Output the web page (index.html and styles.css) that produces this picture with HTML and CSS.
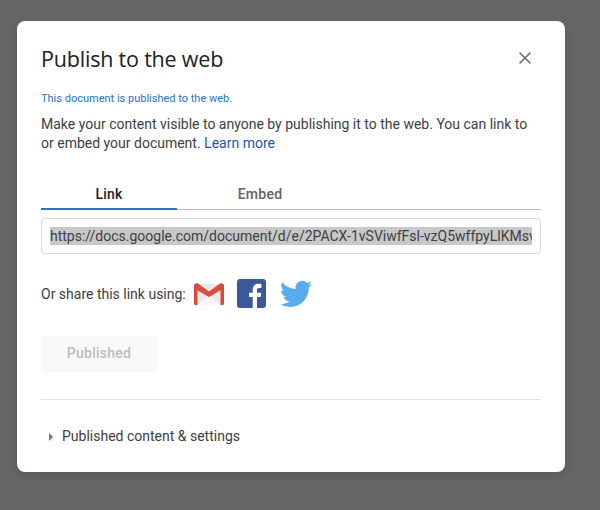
FILE: index.html
```html
<!DOCTYPE html>
<html lang="en">
<head>
<meta charset="utf-8">
<title>Publish to the web</title>
<link rel="stylesheet" href="styles.css">
</head>
<body>
<div class="dialog">
  <header class="head">
    <h1 class="title">Publish to the web</h1>
    <svg class="close" viewBox="0 0 12 12" width="12" height="12"><path d="M.6.6l10.8 10.8M11.4.6L.6 11.4" fill="none" stroke="#70757a" stroke-width="1.5"/></svg>
  </header>
  <p class="status">This document is published to the web.</p>
  <p class="desc">Make your content visible to anyone by publishing it to the web. You can link to or embed your document. <a class="learn">Learn more</a></p>
  <div class="tabs">
    <div class="tab active">Link</div>
    <div class="tab">Embed</div>
  </div>
  <div class="url"><div class="url-clip"><span class="url-text">https://docs.google.com/document/d/e/2PACX-1vSViwfFsl-vzQ5wffpyLlKMsvWq8Jd</span></div></div>
  <div class="share">
    <span class="share-label">Or share this link using:</span>
    <svg class="gmail" viewBox="0 0 30 22" width="30" height="22">
      <path d="M1 1h28v19.500a1.500 1.500 0 0 1-1.500 1.500h-25A1.500 1.500 0 0 1 1 20.500z" fill="#e9e9e9"/>
      <path d="M3 22L15 11.500 27 22z" fill="#f6f6f6"/>
      <path d="M2 .5h2L15 8.500 26 .5h2L27 7 15 14 3 7z" fill="#dd4b39"/>
      <path d="M0 2.500A2 2 0 0 1 2 .5h1.500V22H1.500A1.500 1.500 0 0 1 0 20.500zM30 2.500A2 2 0 0 0 28 .5h-1.500V22h2a1.500 1.500 0 0 0 1.500-1.500z" fill="#d9493c"/>
    </svg>
    <svg class="fb" viewBox="0 0 29 29" width="29" height="29">
      <rect width="29" height="29" rx="3" fill="#3b5998"/>
      <path d="M20 29V18h3.700l.6-4.300H20V11c0-1.300.4-2.100 2.200-2.100h2.200V5c-.4 0-1.700-.2-3.200-.2-3.200 0-5.500 2-5.500 5.600v3.300h-3.700V18h3.700v11z" fill="#fff"/>
    </svg>
    <svg class="tw" viewBox="0 0 24 24" width="32" height="32">
      <path d="M23.950 4.570a10 10 0 0 1-2.820.77 4.960 4.960 0 0 0 2.160-2.720c-.95.540-2 .94-3.130 1.170a4.920 4.920 0 0 0-8.380 4.480C7.690 8.090 4.070 6.130 1.640 3.160a4.820 4.820 0 0 0-.67 2.480c0 1.710.87 3.210 2.190 4.100a4.900 4.900 0 0 1-2.230-.62v.06a4.920 4.920 0 0 0 3.950 4.830 5 5 0 0 1-2.210.08 4.940 4.940 0 0 0 4.600 3.420A9.870 9.870 0 0 1 0 19.540a14 14 0 0 0 7.560 2.210c9.050 0 14-7.500 14-13.980 0-.21 0-.42-.02-.63a9.940 9.940 0 0 0 2.410-2.570z" fill="#55acee"/>
    </svg>
  </div>
  <button class="published" type="button">Published</button>
  <hr class="rule">
  <div class="details"><span class="caret"></span>Published content &amp; settings</div>
</div>
</body>
</html>
```
FILE: styles.css
```css
* { box-sizing: border-box; }
html, body { height: 100%; }
body {
  margin: 0;
  background: #666;
  font-family: Roboto, "Liberation Sans", sans-serif;
  color: #3c4043;
  overflow: hidden;
  padding: 21px 0 0 17px;
}
.dialog {
  width: 548px;
  height: 451px;
  background: #fff;
  border-radius: 8px;
  padding: 0 24px;
  box-shadow: 0 4px 12px rgba(0,0,0,.12);
}
.head {
  height: 33px;
  padding-top: 21px;
  box-sizing: content-box;
  display: flex;
  align-items: center;
  justify-content: space-between;
}
.title {
  margin: 0;
  font-family: "Open Sans", sans-serif;
  font-size: 21.5px;
  font-weight: 400;
  letter-spacing: -0.2px;
  color: #202124;
}
.close { margin: 0 10px 2px 0; }
.status {
  margin: 17px 0 0;
  font-size: 11px;
  line-height: 14px;
  color: #1a73e8;
}
.desc {
  margin: 9px 0 0;
  font-size: 14px;
  line-height: 19px;
}
.learn { color: #1a56c4; }
.tabs {
  margin-top: 21px;
  display: flex;
  height: 36px;
  border-bottom: 1px solid #bdbdbd;
}
.tab {
  width: 136px;
  height: 36px;
  padding-top: 10px;
  text-align: center;
  line-height: 20px;
  color: #5f6368;
  font-family: Roboto, sans-serif;
  font-size: 14px;
  font-weight: 500;
  letter-spacing: .25px;
}
.tab + .tab { width: 166px; }
.tab.active {
  color: #202124;
  border-bottom: 2px solid #1a73e8;
}
.url {
  margin-top: 8px;
  height: 36px;
  border: 1px solid #dadce0;
  border-radius: 4px;
  padding: 8px 8px;
}
.url-clip {
  overflow: hidden;
  white-space: nowrap;
  height: 18px;
  line-height: 18px;
  font-size: 14px;
  background: #c8c8c8;
  color: #3c4043;
}
.share {
  margin-top: 24px;
  display: flex;
  align-items: center;
  height: 31px;
}
.share-label { font-size: 14px; }
.gmail { margin-left: 8px; }
.fb { margin-left: 13px; }
.tw { margin-left: 14px; }
.published {
  display: block;
  margin-top: 27px;
  width: 116px;
  height: 36px;
  border: 0;
  border-radius: 4px;
  background: #f8f8f8;
  color: #bdbdbd;
  font-family: Roboto, sans-serif;
  font-size: 14px;
  font-weight: 500;
  letter-spacing: .25px;
  padding: 0 0 2px;
}
.rule {
  margin: 27px 0 0;
  border: 0;
  border-top: 1px solid #e0e0e0;
}
.details {
  margin-top: 27px;
  display: flex;
  align-items: center;
  font-size: 14px;
  line-height: 18px;
}
.caret {
  width: 0;
  height: 0;
  margin: 2px 9px 0 8px;
  border-left: 4px solid #70757a;
  border-top: 4px solid transparent;
  border-bottom: 4px solid transparent;
}
```
